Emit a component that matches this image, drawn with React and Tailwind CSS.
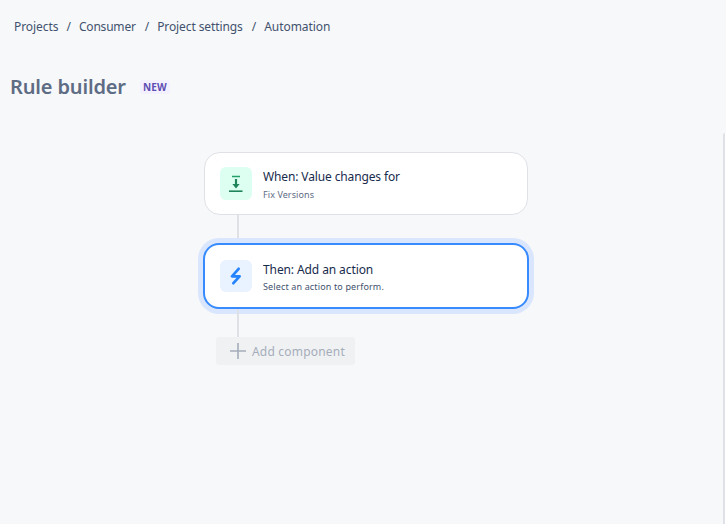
import React from "react";

const Crumb = ({ children, t = "tracking-[-0.06px]" }) => <span className={"text-[#42526e] " + t}>{children}</span>;
const Sep = () => <span className="mx-[8px] text-[#42526e]">/</span>;

export default function App() {
  return (
    <div className="w-[726px] h-[524px] overflow-hidden bg-[#f7f8fa] flex flex-col font-['Noto_Sans',sans-serif]">
      <div className="pt-[19px] pl-[14px] h-[60px] text-[12px] leading-[16px] flex items-start">
        <Crumb>Projects</Crumb><Sep /><Crumb t="tracking-[-0.2px] mr-[1px]">Consumer</Crumb><Sep /><Crumb t="tracking-[-0.1px] mr-[1px]">Project settings</Crumb><Sep /><Crumb>Automation</Crumb>
      </div>
      <div className="pl-[10px] h-[54px] flex items-start">
        <h1 className="text-[20px] leading-[56px] h-[56px] font-semibold tracking-[-0.15px] text-[#5e6c84] mt-[-1px]">Rule builder</h1>
        <span className="ml-[14px] mt-[20px] h-[14px] pl-[3px] pr-[3px] rounded-[3px] bg-[#f3f0ff] text-[#5e4db2] text-[10px] leading-[14px] font-bold tracking-[0.2px]">NEW</span>
      </div>
      <div className="flex-1 flex justify-end pt-[19px]">
        <div className="flex-1 pt-[19px] pl-[204px]">
          <div className="w-[324px] h-[63px] rounded-[16px] border border-[#dfe1e6] bg-white flex items-center pl-[15px]">
            <div className="w-[32px] h-[33px] rounded-[6px] bg-[#dcfff1] flex items-center justify-center">
              <svg width="16" height="18" viewBox="0 0 16 18" fill="none">
                <path d="M4 1.5h8" stroke="#22a06b" strokeWidth="1.5" />
                <path d="M1 16.2h13.5" stroke="#1f845a" strokeWidth="1.6" />
                <path d="M8 4v6" stroke="#1f845a" strokeWidth="2.2" />
                <path d="M4.4 9h7.2L8 13.4z" fill="#1f845a" />
              </svg>
            </div>
            <div className="ml-[11px] pt-[2px]">
              <div className="text-[12px] leading-[16px] tracking-[-0.13px] text-[#172b4d]">When: Value changes for</div>
              <div className="text-[9px] leading-[12px] mt-[4px] tracking-[0.08px] text-[#5e6c84]">Fix Versions</div>
            </div>
          </div>
          <div className="w-[2px] h-[28px] ml-[33px] bg-[#dfe1e6]" />
          <div className="w-[326px] h-[66px] ml-[-1px] rounded-[16px] border-2 border-[#388bff] bg-white shadow-[0_0_0_5px_#d9e6fd] flex items-center pl-[15px]">
            <div className="w-[32px] h-[32px] rounded-[6px] bg-[#e9f2ff] flex items-center justify-center">
              <svg width="14" height="18" viewBox="0 0 14 18" fill="none">
                <path d="M9.6 1.8 3 9.3h7.6L4.4 16.2" stroke="#2684ff" strokeWidth="2.7" strokeLinejoin="round" strokeLinecap="round" />
              </svg>
            </div>
            <div className="ml-[11px] pt-[2px]">
              <div className="text-[12px] leading-[16px] tracking-[-0.1px] text-[#172b4d]">Then: Add an action</div>
              <div className="text-[9px] leading-[12px] mt-[3px] tracking-[0.14px] text-[#42526e]">Select an action to perform.</div>
            </div>
          </div>
          <div className="w-[2px] h-[28px] ml-[33px] bg-[#dfe1e6]" />
          <div className="w-[139px] h-[28px] ml-[12px] rounded-[3px] bg-[#f0f1f3] flex items-center pl-[13px] text-[#a5adba]">
            <svg width="18" height="18" viewBox="0 0 18 18" fill="none">
              <path d="M9 1v16M1 9h16" stroke="#a5adba" strokeWidth="1.6" />
            </svg>
            <span className="ml-[5px] pt-[2px] text-[12px] leading-[16px] tracking-[0.2px]">Add component</span>
          </div>
        </div>
        <div className="w-[3px] h-full mr-[0px] bg-white border-l-2 border-[#dfe1e6] rounded-tl-[2px]" />
      </div>
    </div>
  );
}
